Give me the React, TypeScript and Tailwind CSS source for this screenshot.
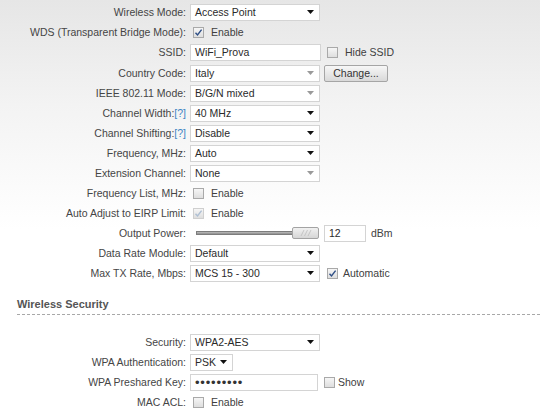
import type { ReactNode } from "react"

function Arrow({ dim }: { dim?: boolean }) {
  return (
    <svg width="7" height="4" viewBox="0 0 7 4" className="shrink-0">
      <path d="M0 0h7L3.5 4z" fill={dim ? "#9a9a9a" : "#111"} />
    </svg>
  )
}

function Select({ value, w = "w-[130px]", dim }: { value: string; w?: string; dim?: boolean }) {
  return (
    <div
      className={`flex h-[17px] ${w} items-center justify-between border border-[#d4d4d4] bg-white pr-[5px] pl-[4px] text-[#2a2a2a]`}
    >
      <span>{value}</span>
      <Arrow dim={dim} />
    </div>
  )
}

function Input({ value, w = "w-[131px]", dots }: { value: string; w?: string; dots?: boolean }) {
  return (
    <div className={`flex h-[17px] ${w} items-center border border-[#d4d4d4] bg-white pl-[4px] text-[#2a2a2a]`}>
      {dots ? <span className="text-[13px] leading-none tracking-[0.8px] text-[#333]">{value}</span> : value}
    </div>
  )
}

function Check({ checked, disabled }: { checked?: boolean; disabled?: boolean }) {
  return (
    <span
      className={`flex h-[11px] w-[11px] shrink-0 items-center justify-center border ${
        disabled ? "border-[#cfcfcf]" : "border-[#a9a9a9]"
      } bg-linear-to-b from-[#f6f6f6] to-[#dedede]`}
    >
      {checked && (
        <svg width="9" height="9" viewBox="0 0 9 9">
          <path
            d="M1.5 4.8l2 2.2L7.6 1.6"
            fill="none"
            stroke={disabled ? "#aebfd3" : "#2f4f86"}
            strokeWidth="1.4"
          />
        </svg>
      )}
    </span>
  )
}

function Row({ label, children }: { label: ReactNode; children: ReactNode }) {
  return (
    <div className="grid h-[20px] grid-cols-[186px_1fr] items-center gap-x-[4px]">
      <div className="text-right text-[#454545]">{label}</div>
      <div className="flex items-center">{children}</div>
    </div>
  )
}

function Help() {
  return <span className="text-[#3f86c4]">[?]</span>
}

function Enable({ checked, disabled }: { checked?: boolean; disabled?: boolean }) {
  return (
    <div className="ml-[3px] flex items-center gap-[7px]">
      <Check checked={checked} disabled={disabled} />
      <span className="text-[#404040]">Enable</span>
    </div>
  )
}

function Slider() {
  return (
    <div className="ml-[6px] flex w-[123px] items-center">
      <div className="h-[4px] flex-1 border border-[#7d7d7d] bg-linear-to-b from-[#bdbdbd] to-[#8d8d8d]" />
      <div className="relative -ml-[1px] flex h-[12px] w-[27px] items-center justify-center rounded-[2px] border border-[#a3a3a3] bg-linear-to-b from-[#f1f1f1] to-[#d6d6d6]">
        <svg width="12" height="6" viewBox="0 0 12 6">
          <path d="M1 6L4 0M4.5 6L7.5 0M8 6L11 0" stroke="#bdbdbd" strokeWidth="0.8" />
        </svg>
      </div>
    </div>
  )
}

export default function App() {
  return (
    <div className="h-screen w-full overflow-hidden bg-[linear-gradient(180deg,#e6e6e6_0%,#f3f3f3_25%,#ffffff_55%)] pt-[2px] font-['Liberation_Sans',Arial,sans-serif] text-[10.5px] leading-none">
      <Row label="Wireless Mode:">
        <Select value="Access Point" />
      </Row>
      <Row label="WDS (Transparent Bridge Mode):">
        <Enable checked />
      </Row>
      <Row label="SSID:">
        <Input value="WiFi_Prova" />
        <span className="ml-[6px]">
          <Check />
        </span>
        <span className="ml-[7px] text-[#404040]">Hide SSID</span>
      </Row>
      <div className="pt-[1px]">
        <Row label="Country Code:">
          <Select value="Italy" dim />
          <div className="ml-[4px] flex h-[17px] w-[64px] items-center justify-center rounded-[2px] border border-[#a5a5a5] bg-linear-to-b from-[#f7f7f7] to-[#d9d9d9] text-[#333]">
            Change...
          </div>
        </Row>
      </div>
      <Row label="IEEE 802.11 Mode:">
        <Select value="B/G/N mixed" dim />
      </Row>
      <Row
        label={
          <>
            Channel Width:<Help />
          </>
        }
      >
        <Select value="40 MHz" />
      </Row>
      <Row
        label={
          <>
            Channel Shifting:<Help />
          </>
        }
      >
        <Select value="Disable" />
      </Row>
      <Row label="Frequency, MHz:">
        <Select value="Auto" />
      </Row>
      <Row label="Extension Channel:">
        <Select value="None" dim />
      </Row>
      <Row label="Frequency List, MHz:">
        <Enable />
      </Row>
      <Row label="Auto Adjust to EIRP Limit:">
        <Enable checked disabled />
      </Row>
      <Row label="Output Power:">
        <Slider />
        <div className="ml-[5px]">
          <Input value="12" w="w-[42px]" />
        </div>
        <span className="ml-[5px] text-[#404040]">dBm</span>
      </Row>
      <Row label="Data Rate Module:">
        <Select value="Default" />
      </Row>
      <Row label="Max TX Rate, Mbps:">
        <Select value="MCS 15 - 300" />
        <span className="ml-[7px]">
          <Check checked />
        </span>
        <span className="ml-[5px] text-[#404040]">Automatic</span>
      </Row>

      <div className="mt-[16px] ml-[17px] border-b border-dashed border-[#a8a8a8] pb-[4px] text-[11px] font-bold text-[#555]">
        Wireless Security
      </div>

      <div className="mt-[17px]">
        <Row label="Security:">
          <Select value="WPA2-AES" />
        </Row>
        <Row label="WPA Authentication:">
          <Select value="PSK" w="w-[43px]" />
        </Row>
        <Row label="WPA Preshared Key:">
          <Input value="•••••••••" w="w-[128px]" dots />
          <span className="ml-[6px]">
            <Check />
          </span>
          <span className="ml-[3px] text-[#404040]">Show</span>
        </Row>
        <Row label="MAC ACL:">
          <Enable />
        </Row>
      </div>
    </div>
  )
}
